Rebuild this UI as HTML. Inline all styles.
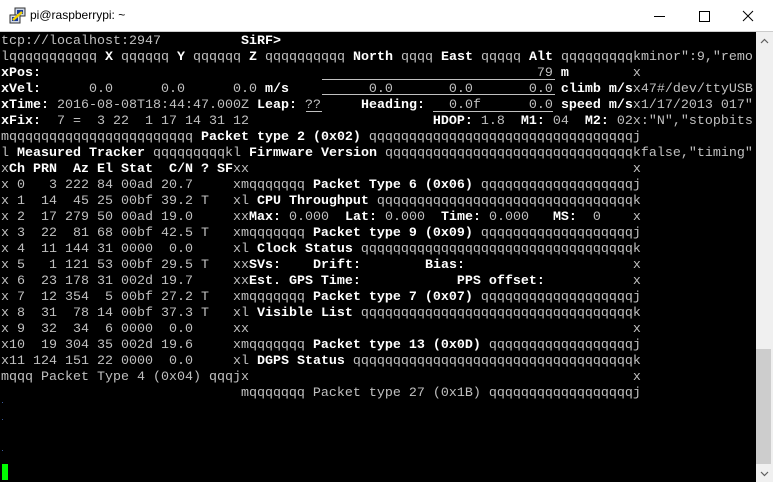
<!DOCTYPE html>
<html><head><meta charset="utf-8"><style>
html,body{margin:0;padding:0;width:773px;height:482px;overflow:hidden;background:#000}
#win{position:absolute;left:0;top:0;width:773px;height:482px;background:#000}
#title{position:absolute;left:0;top:0;width:773px;height:31px;background:#fff;border-bottom:1px solid #ccc}
#title .t{position:absolute;left:30px;top:8px;font:12px "Liberation Sans",sans-serif;color:#000}
#term{position:absolute;left:1px;top:32px;width:755px;height:450px;background:#000}
.r{position:absolute;left:1px;height:16px;line-height:16px;margin-top:2px;font-family:"Liberation Mono",monospace;font-size:13.33px;color:#c0c0c0;white-space:pre}
b{color:#fff;font-weight:bold}
.u{position:absolute;height:1px;background:#c0c0c0}
#sb{position:absolute;left:756px;top:32px;width:17px;height:450px;background:#f0f0f0}
#thumb{position:absolute;left:756px;top:349px;width:15px;height:115px;background:#cdcdcd}
</style></head><body><div id="win">
<div id="title">
<svg style="position:absolute;left:9px;top:7px" width="18" height="18" viewBox="0 0 18 18">
<rect x="6" y="1" width="10" height="8" fill="#cfd8e8" stroke="#333"/><rect x="8" y="3" width="6" height="4" fill="#1a3a9a"/>
<rect x="1" y="8" width="10" height="8" fill="#cfd8e8" stroke="#333"/><rect x="3" y="10" width="6" height="4" fill="#1a3a9a"/>
<path d="M4 13 L13 5" stroke="#f0d000" stroke-width="2.5"/></svg>
<div class="t">pi@raspberrypi: ~</div>
<svg style="position:absolute;left:650px;top:8px" width="120" height="16">
<line x1="4" y1="8.5" x2="15" y2="8.5" stroke="#000"/>
<rect x="49.5" y="3.5" width="10" height="10" fill="none" stroke="#000"/>
<path d="M93 3 L103 13 M103 3 L93 13" stroke="#000"/></svg>
</div>
<div id="term"></div>
<div class="r" style="top:32px">tcp://localhost:2947          <b>SiRF&gt;</b></div>
<div class="r" style="top:48px">lqqqqqqqqqqq <b>X</b> qqqqqq <b>Y</b> qqqqqq <b>Z</b> qqqqqqqqqq <b>North</b> qqqq <b>East</b> qqqqq <b>Alt</b> qqqqqqqqqkminor":9,"remo</div>
<div class="r" style="top:64px"><b>xPos:</b>                                                              79 <b>m</b>        x</div>
<div class="r" style="top:80px"><b>xVel:</b>      0.0      0.0      0.0 <b>m/s</b>          0.0       0.0       0.0 <b>climb m/s</b>x47#/dev/ttyUSB</div>
<div class="r" style="top:96px"><b>xTime:</b> 2016-08-08T18:44:47.000Z <b>Leap:</b> ??     <b>Heading:</b>   0.0f      0.0 <b>speed m/s</b>x1/17/2013 017"</div>
<div class="r" style="top:112px"><b>xFix:</b>  7 =  3 22  1 17 14 31 12                       <b>HDOP:</b> 1.8  <b>M1:</b> 04  <b>M2:</b> 02x:"N","stopbits</div>
<div class="r" style="top:128px">mqqqqqqqqqqqqqqqqqqqqqqq <b>Packet type 2 (0x02)</b> qqqqqqqqqqqqqqqqqqqqqqqqqqqqqqqqqj</div>
<div class="r" style="top:144px">l <b>Measured Tracker</b> qqqqqqqqqkl <b>Firmware Version</b> qqqqqqqqqqqqqqqqqqqqqqqqqqqqqqqkfalse,"timing"</div>
<div class="r" style="top:160px">x<b>Ch PRN  Az El Stat  C/N ? SF</b>xx                                                x</div>
<div class="r" style="top:176px">x 0   3 222 84 00ad 20.7     xmqqqqqqq <b>Packet Type 6 (0x06)</b> qqqqqqqqqqqqqqqqqqqj</div>
<div class="r" style="top:192px">x 1  14  45 25 00bf 39.2 T   xl <b>CPU Throughput</b> qqqqqqqqqqqqqqqqqqqqqqqqqqqqqqqqk</div>
<div class="r" style="top:208px">x 2  17 279 50 00ad 19.0     xx<b>Max:</b> 0.000  <b>Lat:</b> 0.000  <b>Time:</b> 0.000   <b>MS:</b>  0    x</div>
<div class="r" style="top:224px">x 3  22  81 68 00bf 42.5 T   xmqqqqqqq <b>Packet type 9 (0x09)</b> qqqqqqqqqqqqqqqqqqqj</div>
<div class="r" style="top:240px">x 4  11 144 31 0000  0.0     xl <b>Clock Status</b> qqqqqqqqqqqqqqqqqqqqqqqqqqqqqqqqqqk</div>
<div class="r" style="top:256px">x 5   1 121 53 00bf 29.5 T   xx<b>SVs:</b>    <b>Drift:</b>        <b>Bias:</b>                     x</div>
<div class="r" style="top:272px">x 6  23 178 31 002d 19.7     xx<b>Est. GPS Time:</b>            <b>PPS offset:</b>           x</div>
<div class="r" style="top:288px">x 7  12 354  5 00bf 27.2 T   xmqqqqqqq <b>Packet type 7 (0x07)</b> qqqqqqqqqqqqqqqqqqqj</div>
<div class="r" style="top:304px">x 8  31  78 14 00bf 37.3 T   xl <b>Visible List</b> qqqqqqqqqqqqqqqqqqqqqqqqqqqqqqqqqqk</div>
<div class="r" style="top:320px">x 9  32  34  6 0000  0.0     xx                                                x</div>
<div class="r" style="top:336px">x10  19 304 35 002d 19.6     xmqqqqqqq <b>Packet type 13 (0x0D)</b> qqqqqqqqqqqqqqqqqqj</div>
<div class="r" style="top:352px">x11 124 151 22 0000  0.0     xl <b>DGPS Status</b> qqqqqqqqqqqqqqqqqqqqqqqqqqqqqqqqqqqk</div>
<div class="r" style="top:368px">mqqq Packet Type 4 (0x04) qqqjx                                                x</div>
<div class="r" style="top:384px">                              mqqqqqqq Packet type 27 (0x1B) qqqqqqqqqqqqqqqqqqj</div>
<div class="u" style="left:322px;top:79px;width:233px"></div>
<div class="u" style="left:322px;top:94px;width:233px"></div>
<div class="u" style="left:306px;top:111px;width:16px"></div>
<div class="u" style="left:433px;top:111px;width:120px"></div>
<div style="position:absolute;left:2px;top:402px;width:1px;height:1px;background:#3a5a9a"></div>
<div style="position:absolute;left:2px;top:419px;width:1px;height:1px;background:#3a5a9a"></div>
<div style="position:absolute;left:2px;top:450px;width:1px;height:1px;background:#3a5a9a"></div>
<div style="position:absolute;left:2px;top:464px;width:6px;height:16px;background:#00ff00"></div>
<div id="sb"></div>
<div id="thumb"></div>
<svg style="position:absolute;left:756px;top:33px" width="17" height="16"><path d="M5 10 L8.5 6.5 L12 10" fill="none" stroke="#606060" stroke-width="1.2"/></svg>
<svg style="position:absolute;left:756px;top:466px" width="17" height="16"><path d="M5 6 L8.5 9.5 L12 6" fill="none" stroke="#606060" stroke-width="1.2"/></svg>
</div></body></html>
